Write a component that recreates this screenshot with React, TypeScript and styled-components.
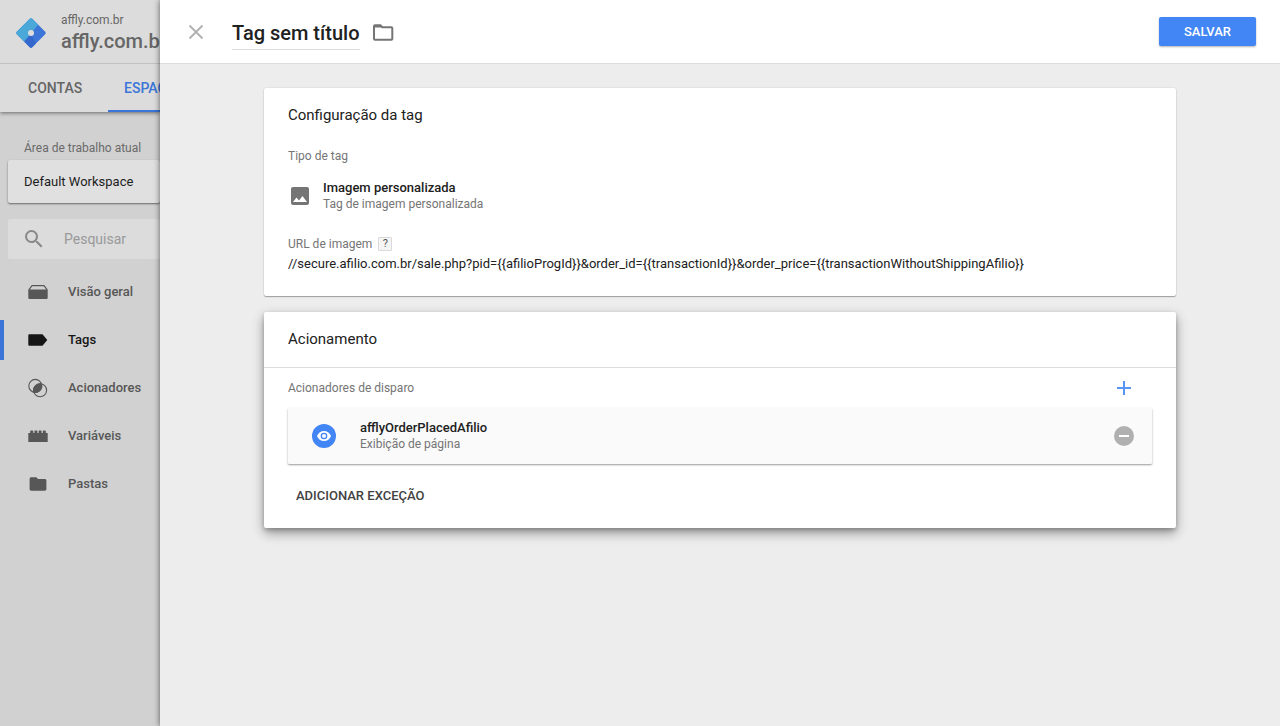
import React from "react";
import styled, { createGlobalStyle } from "styled-components";

const Global = createGlobalStyle`
  *, *::before, *::after { box-sizing: border-box; }
  body {
    margin: 0;
    background: #ededed;
    color: #212121;
    font-family: Roboto, "Liberation Sans", sans-serif;
    font-size: 13px;
    line-height: 16px;
  }
  h1, h2, p { margin: 0; font-weight: 400; }
  button, input { font: inherit; color: inherit; border: 0; padding: 0; background: none; }
  button { cursor: pointer; }
  svg { display: block; flex: none; }
`;

const Page = styled.div`
  display: flex;
  min-height: 100vh;
`;

/* Dimmed workspace behind the sheet */
const Workspace = styled.aside`
  width: 160px;
  flex: none;
  overflow: hidden;
  white-space: nowrap;
  background: #d1d1d1;
`;

const TopBar = styled.header`
  background: #dcdcdc;
  box-shadow: 0 1px 4px rgba(0, 0, 0, 0.5);
`;

const Account = styled.div`
  display: flex;
  align-items: center;
  gap: 14px;
  height: 64px;
  padding: 2px 0 0 15px;
  border-bottom: 1px solid #c2c2c2;
  color: #666;
`;

const AccountName = styled.div`
  font-size: 12px;
  line-height: 16px;
`;

const ContainerName = styled.div`
  font-size: 20px;
  line-height: 26px;
  font-weight: 500;
`;

const Tabs = styled.nav`
  display: flex;
  gap: 8px;
  padding-left: 12px;
`;

const Tab = styled.a<{ $active?: boolean }>`
  flex: none;
  min-width: 88px;
  height: 48px;
  padding: 2px 16px 0;
  border-bottom: 2px solid ${(p) => (p.$active ? "#3a75d7" : "transparent")};
  color: ${(p) => (p.$active ? "#3a75d7" : "#666")};
  font-size: 14px;
  line-height: 44px;
  font-weight: 500;
  text-decoration: none;
`;

const SideBody = styled.div`
  padding: 28px 0 0 8px;
`;

const SideLabel = styled.div`
  padding-left: 16px;
  color: #6a6a6a;
  font-size: 12px;
  line-height: 16px;
`;

const WorkspaceButton = styled.button`
  display: block;
  width: 100%;
  height: 43px;
  margin-top: 4px;
  padding-left: 16px;
  border-radius: 2px;
  background: #e0e0e0;
  box-shadow: 0 1px 2px rgba(0, 0, 0, 0.5);
  color: #1d1d1d;
  text-align: left;
`;

const Search = styled.label`
  display: flex;
  align-items: center;
  gap: 18px;
  height: 40px;
  margin-top: 16px;
  padding-left: 14px;
  border-radius: 2px;
  background: #dcdcdc;
  color: #888;
`;

const SearchInput = styled.input`
  flex: 1;
  min-width: 0;
  outline: 0;
  font-size: 14px;
  &::placeholder { color: #999; opacity: 1; }
`;

const SideNav = styled.nav`
  display: grid;
  gap: 8px;
  padding-top: 13px;
`;

const SideLink = styled.a<{ $active?: boolean }>`
  display: flex;
  align-items: center;
  gap: 18px;
  height: 40px;
  padding-left: 22px;
  border-left: 4px solid ${(p) => (p.$active ? "#3a75d7" : "transparent")};
  color: ${(p) => (p.$active ? "#161616" : "#575757")};
  font-weight: 500;
  text-decoration: none;
`;

/* Sheet */
const Sheet = styled.main`
  position: relative;
  flex: 1;
  min-width: 0;
  background: #ededed;
  box-shadow: 0 0 6px rgba(0, 0, 0, 0.6);
`;

const SheetHeader = styled.header`
  display: flex;
  align-items: center;
  height: 64px;
  padding: 0 24px;
  border-bottom: 1px solid #dcdcdc;
  background: #fff;
`;

const IconButton = styled.button`
  display: grid;
  place-items: center;
  width: 24px;
  height: 24px;
`;

const TitleInput = styled.input`
  field-sizing: content;
  width: auto;
  min-width: 120px;
  height: 34px;
  margin: 3px 11px 0 24px;
  border-bottom: 1px solid #dcdcdc;
  outline: 0;
  font-size: 20px;
  font-weight: 500;
`;

const SaveButton = styled.button`
  height: 29px;
  margin-left: auto;
  padding: 0 25px;
  border-radius: 2px;
  background: #4285f4;
  box-shadow: 0 1px 2px rgba(0, 0, 0, 0.3);
  color: #fff;
  font-weight: 500;
`;

const Cards = styled.div`
  display: grid;
  gap: 16px;
  padding: 24px 104px;
`;

const Card = styled.section<{ $raised?: boolean }>`
  border-radius: 2px;
  background: #fff;
  box-shadow: ${(p) =>
    p.$raised
      ? "0 5px 12px rgba(0, 0, 0, 0.38), 0 2px 4px rgba(0, 0, 0, 0.2)"
      : "0 1px 1px rgba(0, 0, 0, 0.3), 0 0 2px rgba(0, 0, 0, 0.15)"};
`;

const CardTitle = styled.h2`
  padding: 0 24px;
  font-size: 15px;
  line-height: 55px;
`;

const ConfigBody = styled.div`
  padding: 5px 24px 24px;
`;

const Label = styled.div`
  display: flex;
  align-items: center;
  gap: 6px;
  color: #757575;
  font-size: 12px;
  line-height: 16px;
`;

const TagType = styled.div`
  display: flex;
  align-items: center;
  gap: 11px;
  padding: 16px 0 24px;
  color: #757575;
`;

const Strong = styled.div`
  color: #212121;
  font-weight: 500;
`;

const Sub = styled.div`
  color: #757575;
  font-size: 12px;
  line-height: 16px;
`;

const Help = styled.button`
  width: 14px;
  height: 14px;
  border: 1px solid #dadada;
  border-radius: 1px;
  background: #f5f5f5;
  color: #555;
  font-size: 11px;
  line-height: 12px;
`;

const Url = styled.p`
  padding-top: 4px;
  overflow-wrap: anywhere;
`;

const TriggerBody = styled.div`
  padding: 8px 24px 16px;
  border-top: 1px solid #dcdcdc;
`;

const TriggerHead = styled.div`
  display: flex;
  align-items: center;
  justify-content: space-between;
  padding-right: 16px;
`;

const Trigger = styled.div`
  display: flex;
  align-items: center;
  gap: 24px;
  height: 56px;
  margin: 8px 0 16px;
  padding: 0 16px 0 24px;
  border-radius: 1px;
  background: #fafafa;
  box-shadow: 0 1px 2px rgba(0, 0, 0, 0.4);
`;

const TriggerText = styled.div`
  flex: 1;
`;

const TextButton = styled.button`
  height: 32px;
  padding: 0 8px;
  color: #424242;
  font-weight: 500;
`;

const Icon = ({ size = 24, children }: { size?: number; children: React.ReactNode }) => (
  <svg width={size} height={size} viewBox="0 0 24 24" fill="currentColor" aria-hidden="true">
    {children}
  </svg>
);

const Logo = () => (
  <svg width="32" height="32" viewBox="0 0 32 32" aria-hidden="true">
    <path d="M14.800 1.800Q16 .6 17.200 1.800L30.200 14.800Q31.400 16 30.200 17.200L17.200 30.200Q16 31.400 14.800 30.200L1.800 17.200Q.6 16 1.800 14.800Z" fill="#3a75d7" />
    <path d="M9.400 24.800 16 17 20.900 26.500 17.200 30.200Q16 31.400 14.800 30.200Z" fill="#3568cc" />
    <path d="M14.800 1.800Q16 .6 17.200 1.800L23.200 7.800 9 24.400 1.800 17.200Q.6 16 1.800 14.800Z" fill="#4aa9d8" />
    <circle cx="16" cy="16" r="3" fill="#dcdcdc" />
  </svg>
);

const navItems = [
  {
    label: "Visão geral",
    icon: (
      <>
        <path d="M2.300 9.500h19.400v8.300a1.200 1.200 0 0 1-1.200 1.200h-17a1.200 1.200 0 0 1-1.200-1.200z" />
        <path d="M2.800 9.800 6 5.700h12l3.200 4.100" fill="none" stroke="currentColor" strokeWidth="1.200" />
      </>
    ),
  },
  {
    label: "Tags",
    active: true,
    icon: <path d="M3.300 6.300h13.200L21.300 12l-4.800 5.700H3.300a1 1 0 0 1-1-1V7.300a1 1 0 0 1 1-1z" />,
  },
  {
    label: "Acionadores",
    icon: (
      <>
        <circle cx="9.300" cy="9.900" r="6.500" fill="none" stroke="currentColor" strokeWidth="1.100" />
        <circle cx="14.100" cy="14.300" r="6.500" fill="none" stroke="currentColor" strokeWidth="1.100" />
        <path d="M15.500 7.900A6.500 6.500 0 0 1 7.900 16.300A6.500 6.500 0 0 1 15.500 7.900Z" stroke="currentColor" strokeWidth="1" />
      </>
    ),
  },
  {
    label: "Variáveis",
    icon: (
      <>
        <path d="M2.300 9h19.400v9H2.300z" />
        <path d="M4.200 9V7.200q0-.7.7-.7h1.600q.7 0 .7.700V9zM8.400 9V7.200q0-.7.7-.7h1.600q.7 0 .7.700V9zM12.600 9V7.200q0-.7.7-.7h1.600q.7 0 .7.700V9zM16.800 9V7.200q0-.7.7-.7h1.600q.7 0 .7.700V9z" />
      </>
    ),
  },
  {
    label: "Pastas",
    icon: <path d="M10.300 5.300H5.200c-.9 0-1.600.7-1.600 1.600v10.200c0 .9.700 1.600 1.600 1.600h13.600c.9 0 1.600-.7 1.600-1.600V8.600c0-.9-.7-1.600-1.600-1.600H12z" />,
  },
];

export default function App() {
  return (
    <>
      <Global />
      <Page>
        <Workspace>
          <TopBar>
            <Account>
              <Logo />
              <div>
                <AccountName>affly.com.br</AccountName>
                <ContainerName>affly.com.br</ContainerName>
              </div>
            </Account>
            <Tabs>
              <Tab href="#contas">CONTAS</Tab>
              <Tab href="#espaco" $active>ESPAÇO</Tab>
            </Tabs>
          </TopBar>
          <SideBody>
            <SideLabel>Área de trabalho atual</SideLabel>
            <WorkspaceButton type="button">Default Workspace</WorkspaceButton>
            <Search>
              <Icon>
                <path d="M15.500 14h-.79l-.28-.27A6.471 6.471 0 0 0 16 9.500 6.500 6.500 0 1 0 9.500 16c1.610 0 3.090-.59 4.230-1.570l.27.28v.79l5 4.990L20.490 19l-4.990-5zm-6 0C7.010 14 5 11.990 5 9.500S7.010 5 9.500 5 14 7.010 14 9.500 11.990 14 9.500 14z" />
              </Icon>
              <SearchInput type="text" placeholder="Pesquisar" aria-label="Pesquisar" />
            </Search>
          </SideBody>
          <SideNav>
            {navItems.map((item) => (
              <SideLink key={item.label} href="#" $active={item.active}>
                <Icon>{item.icon}</Icon>
                {item.label}
              </SideLink>
            ))}
          </SideNav>
        </Workspace>

        <Sheet>
          <SheetHeader>
            <IconButton type="button" aria-label="Fechar">
              <svg width="24" height="24" viewBox="0 0 24 24" fill="none" stroke="#b0b0b0" strokeWidth="1.800">
                <path d="M5.500 5.500 18.500 18.500M18.500 5.500 5.500 18.500" />
              </svg>
            </IconButton>
            <TitleInput type="text" defaultValue="Tag sem título" aria-label="Nome da tag" />
            <IconButton type="button" aria-label="Pasta">
              <svg width="24" height="24" viewBox="0 0 24 24" fill="none" stroke="#757575" strokeWidth="2">
                <path d="M4 5.300h5.400l2 2H20.300a1 1 0 0 1 1 1v10.400a1 1 0 0 1-1 1H4a1 1 0 0 1-1-1V6.300a1 1 0 0 1 1-1z" />
                <path d="M4 6h6l1 1.500H4z" fill="#757575" stroke="none" />
              </svg>
            </IconButton>
            <SaveButton type="button">SALVAR</SaveButton>
          </SheetHeader>

          <Cards>
            <Card>
              <CardTitle>Configuração da tag</CardTitle>
              <ConfigBody>
                <Label>Tipo de tag</Label>
                <TagType>
                  <Icon>
                    <path d="M21 19V5c0-1.100-.9-2-2-2H5c-1.100 0-2 .9-2 2v14c0 1.100.9 2 2 2h14c1.100 0 2-.9 2-2zM5 18l3.500-4.500 2.500 3 3.500-4.500 4.500 6z" fillRule="evenodd" />
                  </Icon>
                  <div>
                    <Strong>Imagem personalizada</Strong>
                    <Sub>Tag de imagem personalizada</Sub>
                  </div>
                </TagType>
                <Label>
                  URL de imagem
                  <Help type="button" aria-label="Ajuda">?</Help>
                </Label>
                <Url>
                  {"//secure.afilio.com.br/sale.php?pid={{afilioProgId}}&order_id={{transactionId}}&order_price={{transactionWithoutShippingAfilio}}"}
                </Url>
              </ConfigBody>
            </Card>

            <Card $raised>
              <CardTitle>Acionamento</CardTitle>
              <TriggerBody>
                <TriggerHead>
                  <Label>Acionadores de disparo</Label>
                  <IconButton type="button" aria-label="Adicionar acionador">
                    <svg width="24" height="24" viewBox="0 0 24 24" fill="#5a94f5">
                      <path d="M11 5h2v6h6v2h-6v6h-2v-6H5v-2h6z" />
                    </svg>
                  </IconButton>
                </TriggerHead>
                <Trigger>
                  <svg width="24" height="24" viewBox="0 0 24 24" aria-hidden="true">
                    <circle cx="12" cy="12" r="12" fill="#4285f4" />
                    <path d="M12 7c-3.200 0-5.900 2-7 5 1.100 3 3.800 5 7 5s5.900-2 7-5c-1.100-3-3.800-5-7-5z" fill="#fff" />
                    <circle cx="12" cy="12" r="3.300" fill="#4285f4" />
                    <circle cx="12" cy="12" r="2" fill="#fff" />
                  </svg>
                  <TriggerText>
                    <Strong>afflyOrderPlacedAfilio</Strong>
                    <Sub>Exibição de página</Sub>
                  </TriggerText>
                  <IconButton type="button" aria-label="Remover acionador">
                    <svg width="24" height="24" viewBox="0 0 24 24">
                      <circle cx="12" cy="12" r="10" fill="#b0b0b0" />
                      <path d="M7 11h10v2H7z" fill="#fff" />
                    </svg>
                  </IconButton>
                </Trigger>
                <TextButton type="button">ADICIONAR EXCEÇÃO</TextButton>
              </TriggerBody>
            </Card>
          </Cards>
        </Sheet>
      </Page>
    </>
  );
}
